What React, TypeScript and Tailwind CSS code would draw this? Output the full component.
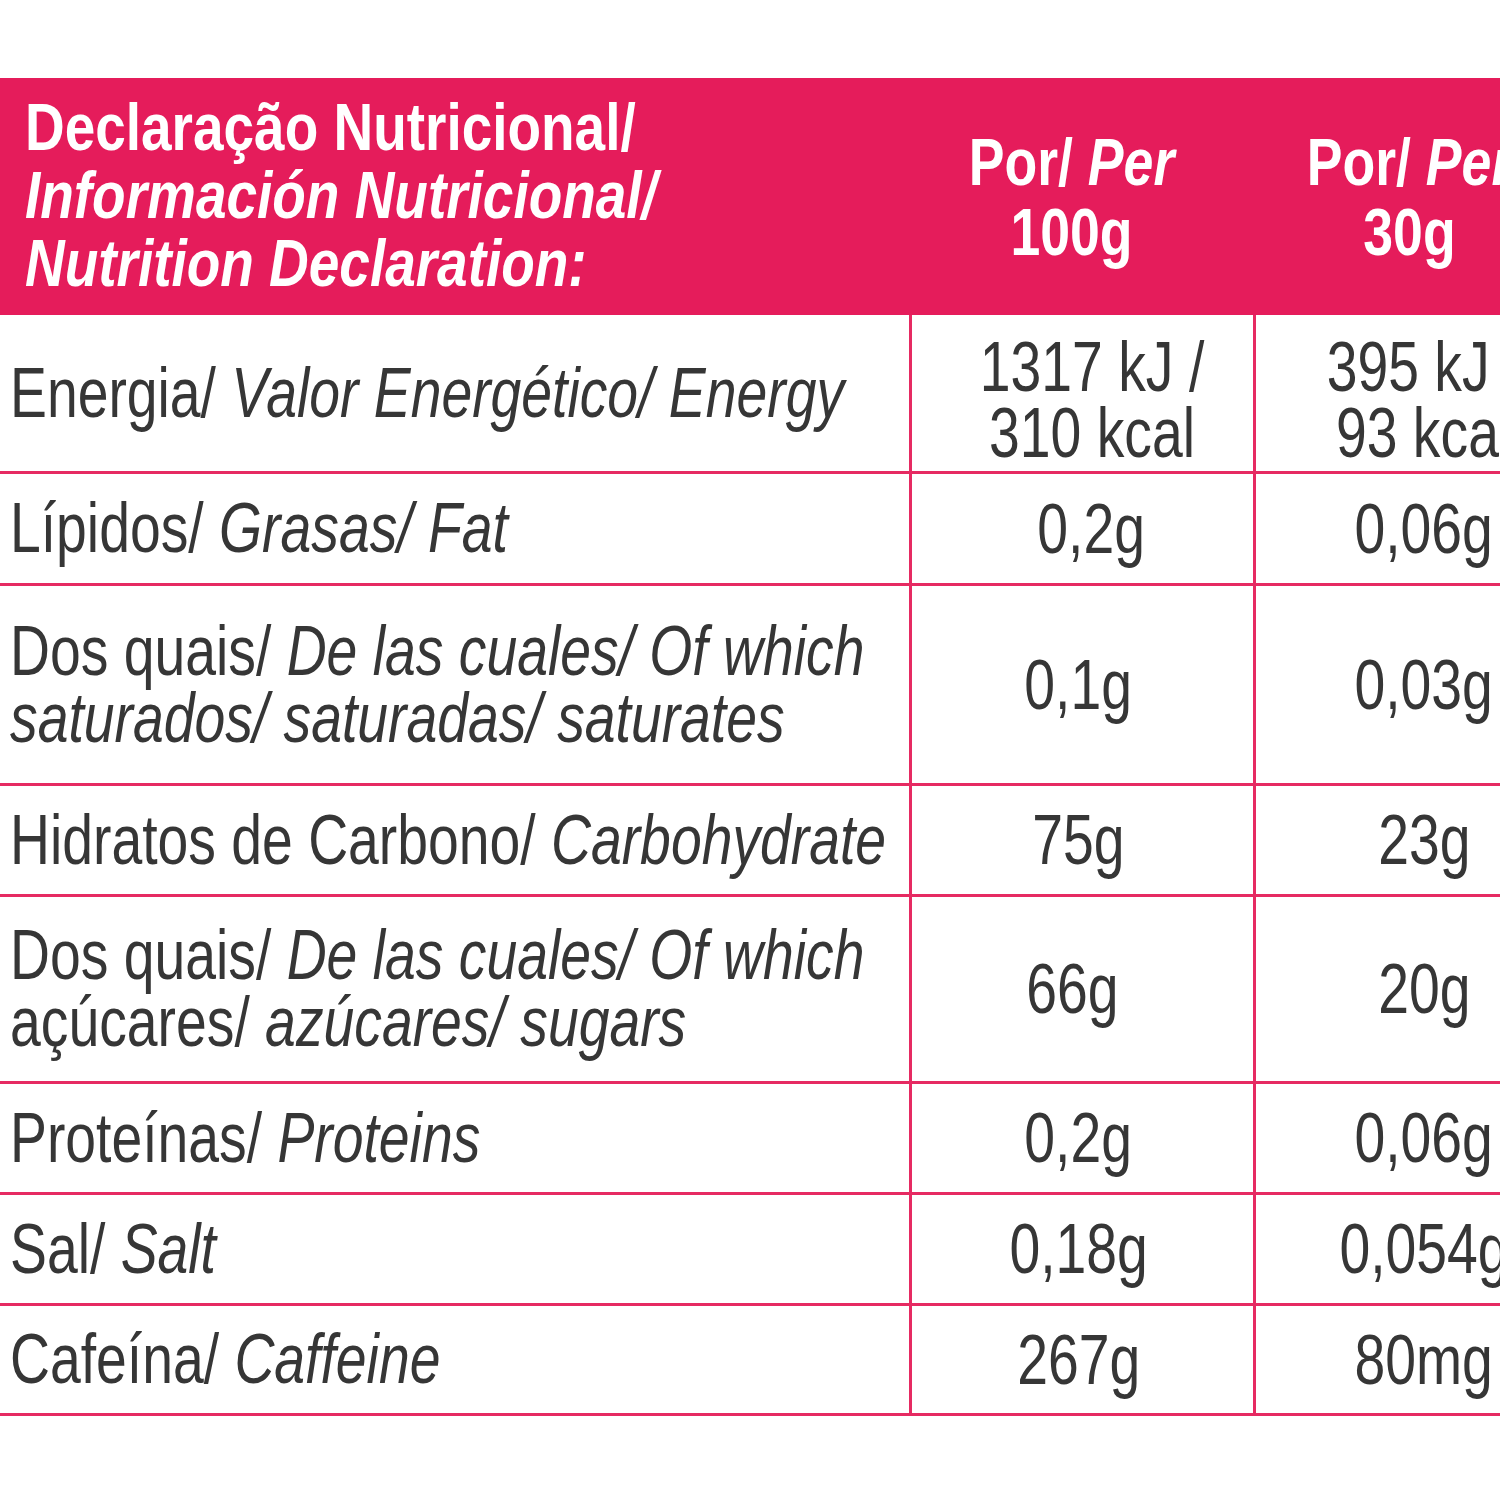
import React from 'react';

// No narrow face is installed, so Liberation Sans is squeezed horizontally to get the condensed look.

type Row = {
  label: React.ReactNode;
  per100: React.ReactNode;
  per30: React.ReactNode;
  height: string;
  valueClass?: string;
  shift100?: string;
};

const rows: Row[] = [
  {
    label: (
      <>
        Energia/ <i>Valor Energético/ Energy</i>
      </>
    ),
    per100: (
      <>
        1317 kJ /<br />310 kcal
      </>
    ),
    per30: (
      <>
        395 kJ /<br />93 kcal
      </>
    ),
    height: 'h-[159px]',
    valueClass: 'leading-[60px] pt-[14px]',
    shift100: 'pl-[20px]',
  },
  {
    label: (
      <>
        Lípidos/ <i>Grasas/ Fat</i>
      </>
    ),
    per100: '0,2g',
    per30: '0,06g',
    height: 'h-[112px]',
    shift100: 'pl-[18px]',
  },
  {
    label: (
      <>
        Dos quais/ <i>De las cuales/ Of which</i>
        <br />
        <i>saturados/ saturadas/ saturates</i>
      </>
    ),
    per100: '0,1g',
    per30: '0,03g',
    height: 'h-[200px]',
  },
  {
    label: (
      <>
        Hidratos de Carbono/ <i>Carbohydrate</i>
      </>
    ),
    per100: '75g',
    per30: '23g',
    height: 'h-[111px]',
  },
  {
    label: (
      <>
        Dos quais/ <i>De las cuales/ Of which</i>
        <br />
        açúcares/ <i>azúcares/ sugars</i>
      </>
    ),
    per100: '66g',
    per30: '20g',
    height: 'h-[187px]',
    shift100: 'pr-[20px]',
  },
  {
    label: (
      <>
        Proteínas/ <i>Proteins</i>
      </>
    ),
    per100: '0,2g',
    per30: '0,06g',
    height: 'h-[111px]',
  },
  {
    label: (
      <>
        Sal/ <i>Salt</i>
      </>
    ),
    per100: '0,18g',
    per30: '0,054g',
    height: 'h-[111px]',
  },
  {
    label: (
      <>
        Cafeína/ <i>Caffeine</i>
      </>
    ),
    per100: '267g',
    per30: '80mg',
    height: 'h-[110px]',
  },
];

export default function App() {
  return (
    <div className="w-[1500px] h-[1500px] overflow-hidden bg-white font-['Liberation_Sans','Arial',sans-serif] text-[#363636]">
      <div className="w-[1600px] pt-[78px]">
        {/* header */}
        <div className="grid grid-cols-[909px_344px_347px] h-[237px] bg-[#e51c5b] text-white font-bold">
          <div className="flex items-center pl-[25px] pb-[4px]">
            <div className="flex flex-col origin-left scale-x-[0.82] whitespace-nowrap text-[67px] leading-[68px]">
              <span>Declaração Nutricional/</span>
              <i>Información Nutricional/</i>
              <i>Nutrition Declaration:</i>
            </div>
          </div>
          <div className="flex items-center justify-center pr-[20px]">
            <div className="flex flex-col items-center scale-x-[0.8] whitespace-nowrap text-[67px] leading-[70px]">
              <span>
                Por/ <i>Per</i>
              </span>
              <span>100g</span>
            </div>
          </div>
          <div className="flex items-center justify-center pr-[34px]">
            <div className="flex flex-col items-center scale-x-[0.8] whitespace-nowrap text-[67px] leading-[70px]">
              <span>
                Por/ <i>Per</i>
              </span>
              <span>30g</span>
            </div>
          </div>
        </div>

        {/* body rows */}
        {rows.map((r, i) => (
          <div
            key={i}
            className={`grid grid-cols-[909px_344px_347px] border-b-[3px] border-[#e62a62] ${r.height}`}
          >
            <div className="flex items-center pl-[10px]">
              <div className="origin-left scale-x-[0.79] whitespace-nowrap text-[70px] leading-[67px]">
                {r.label}
              </div>
            </div>
            <div
              className={`flex items-center justify-center border-l-[3px] border-[#e62a62] ${r.shift100 ?? 'pr-[8px]'}`}
            >
              <div
                className={`text-center scale-x-[0.79] whitespace-nowrap text-[70px] leading-[66px] ${r.valueClass ?? ''}`}
              >
                {r.per100}
              </div>
            </div>
            <div className="flex items-center justify-center border-l-[3px] border-[#e62a62] pr-[8px]">
              <div
                className={`text-center scale-x-[0.79] whitespace-nowrap text-[70px] leading-[66px] ${r.valueClass ?? ''}`}
              >
                {r.per30}
              </div>
            </div>
          </div>
        ))}
      </div>
    </div>
  );
}
